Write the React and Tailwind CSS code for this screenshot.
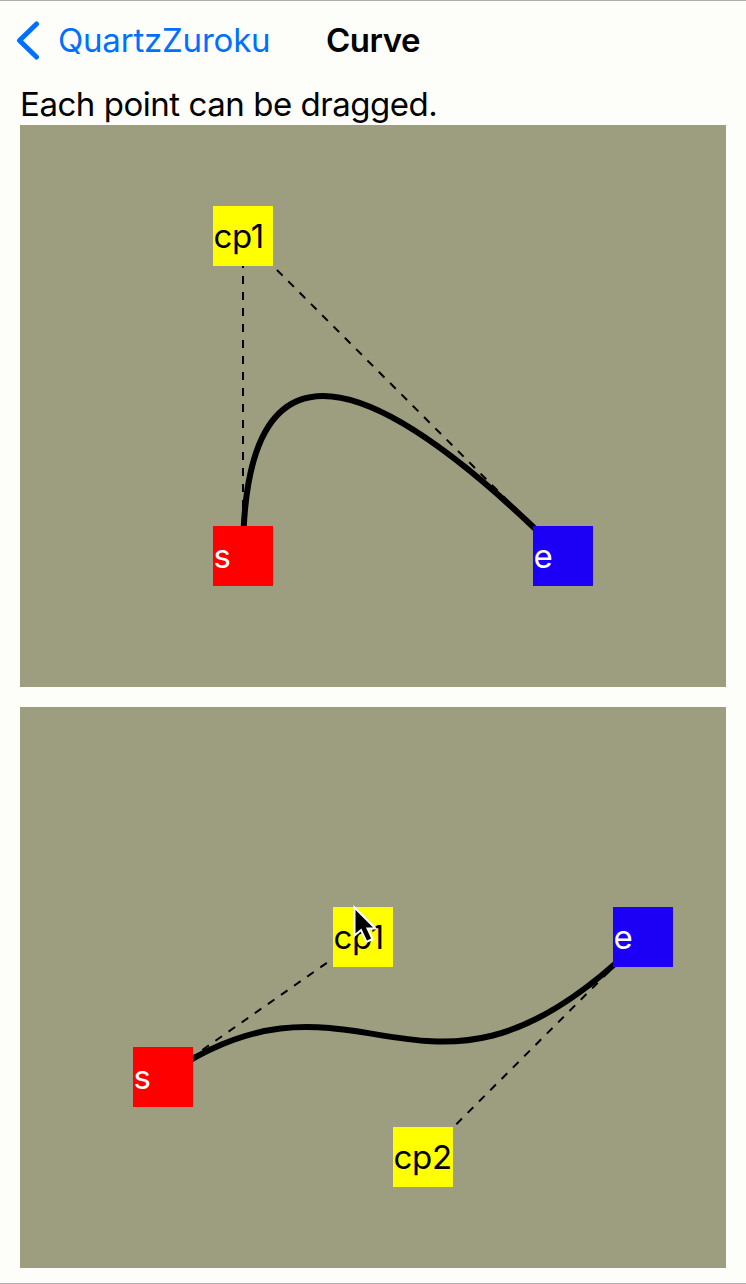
import React from "react";

function Point({ label, className }) {
  return (
    <div className={`absolute flex h-[60px] w-[60px] items-center pl-[0.5px] text-[33px] leading-none tracking-[-0.3px] ${className}`}>
      {label}
    </div>
  );
}

function QuadCurve() {
  return (
    <section className="relative h-[562px] overflow-hidden bg-[#9d9d80]">
      <svg className="h-full w-full" viewBox="0 0 706 562" fill="none" stroke="#000">
        <path d="M223 431L223 111L543 431" strokeWidth="2" strokeDasharray="8 8" />
        <path d="M223 431Q223 111 543 431" strokeWidth="6" />
      </svg>
      <Point label="cp1" className="left-[193px] top-[81px] bg-[#ffff00] text-black" />
      <Point label="s" className="left-[193px] top-[401px] bg-[#ff0000] text-white" />
      <Point label="e" className="left-[513px] top-[401px] bg-[#1c00f6] text-white" />
    </section>
  );
}

function CubicCurve() {
  return (
    <section className="relative h-[561px] overflow-hidden bg-[#9d9d80]">
      <svg className="h-full w-full" viewBox="0 0 706 561" fill="none" stroke="#000">
        <path d="M143 370.5L343 230.5" strokeWidth="2" strokeDasharray="8 8" />
        <path d="M623 230.5L403 450.5" strokeWidth="2" strokeDasharray="8 8" />
        <path d="M143 370.5C343 230.5 403 450.5 623 230.5" strokeWidth="6" />
      </svg>
      <Point label="s" className="left-[113px] top-[340px] bg-[#ff0000] text-white" />
      <Point label="cp1" className="left-[313px] top-[200px] bg-[#ffff00] text-black" />
      <Point label="cp2" className="left-[373px] top-[420px] bg-[#ffff00] text-black" />
      <Point label="e" className="left-[593px] top-[200px] bg-[#1c00f6] text-white" />
      <svg className="absolute left-[333px] top-[198px]" width="26" height="40" viewBox="0 0 26 40">
        <path d="M1.5 2.5V30.5L8 25L13.5 37L19.5 34L14.5 23.5H22.5Z" fill="#000" stroke="#fff" strokeWidth="2" />
      </svg>
    </section>
  );
}

export default function App() {
  return (
    <main className="flex h-[1284px] w-[746px] flex-col border-y border-[#aeaeb2] bg-[#fdfdf9] font-['Inter',sans-serif] text-black">
      <header className="flex h-20 items-center px-4">
        <div className="flex w-[310px] items-center gap-[17px]">
          <svg width="25" height="40" viewBox="0 0 25 40" fill="none" stroke="#0070ff" strokeWidth="5" strokeLinecap="round" strokeLinejoin="round">
            <path d="M20.5 3L3.5 19.5L20.5 36" />
          </svg>
          <span className="pb-[2px] text-[33px] leading-none tracking-[-0.2px] text-[#0070ff]">QuartzZuroku</span>
        </div>
        <h1 className="pb-[2px] text-[33px] font-semibold leading-none tracking-[-0.5px]">Curve</h1>
      </header>
      <div className="flex flex-col px-5">
        <p className="flex h-11 items-center pt-[2px] text-[33px] leading-none tracking-[-0.46px]">Each point can be dragged.</p>
        <div className="flex flex-col gap-5">
          <QuadCurve />
          <CubicCurve />
        </div>
      </div>
    </main>
  );
}
